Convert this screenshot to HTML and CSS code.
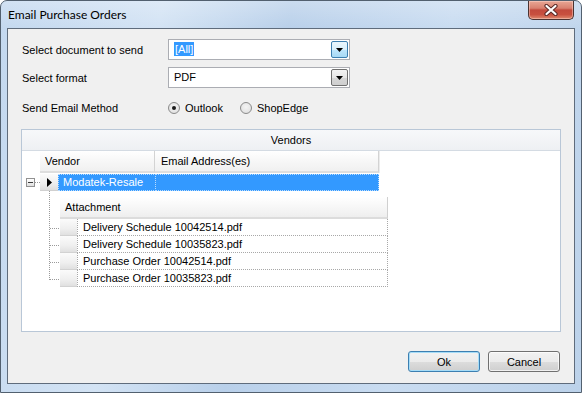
FILE: index.html
```html
<!DOCTYPE html>
<html>
<head>
<meta charset="utf-8">
<link rel="stylesheet" href="styles.css">
</head>
<body>
<div class="window">
  <div class="titlebar">
    <span class="title">Email Purchase Orders</span>
    <div class="close">
      <svg width="16" height="12" viewBox="0 0 16 12"><path d="M3.5 2 L12.5 10 M12.5 2 L3.5 10" stroke="#5a2a26" stroke-width="4.2" stroke-linecap="round"/><path d="M3.5 2 L12.5 10 M12.5 2 L3.5 10" stroke="#ffffff" stroke-width="2.2" stroke-linecap="round"/></svg>
    </div>
  </div>
  <div class="client">
    <div class="form">
      <div class="row">
        <span class="lbl">Select document to send</span>
        <div class="combo">
          <span class="val"><span class="hl">[All]</span></span>
          <span class="dd hot"><svg width="7" height="4" viewBox="0 0 7 4"><path d="M0 0 H7 L3.5 4 Z" fill="#000"/></svg></span>
        </div>
      </div>
      <div class="row r2">
        <span class="lbl">Select format</span>
        <div class="combo">
          <span class="val">PDF</span>
          <span class="dd"><svg width="7" height="4" viewBox="0 0 7 4"><path d="M0 0 H7 L3.5 4 Z" fill="#000"/></svg></span>
        </div>
      </div>
      <div class="row r3">
        <span class="lbl">Send Email Method</span>
        <span class="radio on"></span><span class="rtext">Outlook</span>
        <span class="radio second"></span><span class="rtext">ShopEdge</span>
      </div>
    </div>

    <div class="group">
      <div class="ghead">Vendors</div>
      <div class="grid">
        <div class="colhead">
          <div class="hc c1">Vendor</div>
          <div class="hc c2">Email Address(es)</div>
        </div>
        <div class="prow">
          <span class="exp"><i></i></span>
          <span class="plink"></span>
          <span class="ind"><svg width="5" height="9" viewBox="0 0 5 9"><path d="M0 0 L5 4.5 L0 9 Z" fill="#000"/></svg></span>
          <span class="sel s1">Modatek-Resale</span>
          <span class="sel s2"></span>
        </div>
        <div class="child">
          <svg class="spine" width="11" height="97" viewBox="0 0 11 97">
            <g stroke="#9a9a9a" stroke-width="1" stroke-dasharray="1 1" fill="none">
              <path d="M0.5 0 V89"/>
              <path d="M1 37.5 H11 M1 54.5 H11 M1 71.5 H11 M1 88.5 H11"/>
            </g>
          </svg>
          <div class="ctable">
            <div class="chead">Attachment</div>
            <div class="crow"><span class="cind"></span><span class="ccell">Delivery Schedule 10042514.pdf</span></div>
            <div class="crow"><span class="cind"></span><span class="ccell">Delivery Schedule 10035823.pdf</span></div>
            <div class="crow"><span class="cind"></span><span class="ccell">Purchase Order 10042514.pdf</span></div>
            <div class="crow"><span class="cind"></span><span class="ccell">Purchase Order 10035823.pdf</span></div>
          </div>
        </div>
      </div>
    </div>

    <div class="buttons">
      <button class="btn default">Ok</button>
      <button class="btn">Cancel</button>
    </div>
  </div>
</div>
</body>
</html>
```

FILE: styles.css
```css
* { box-sizing: border-box; margin: 0; padding: 0; }
html, body { width: 582px; height: 393px; overflow: hidden; background: #ffffff; }
body { font-family: "Liberation Sans", Arial, sans-serif; font-size: 11px; color: #000; }

.window {
  width: 582px; height: 393px;
  display: flex; flex-direction: column;
  border: 1px solid #52606f;
  border-radius: 7px 7px 0 0;
  background: linear-gradient(100deg, #c3d8ef 0%, #d3e3f4 25%, #b9d0ea 45%, #c9dcf1 70%, #bcd2ea 100%);
  overflow: hidden;
}

.titlebar {
  height: 27px; flex: none;
  display: flex; align-items: flex-start;
  background: linear-gradient(180deg, rgba(255,255,255,0.25), rgba(255,255,255,0) 100%);
}
.title {
  font-family: Lato, "Liberation Sans", sans-serif; font-size: 12px;
  color: #000; padding-left: 7px; line-height: 14px; margin-top: 7px;
}
.close {
  margin-left: auto; margin-right: 7px;
  width: 46px; height: 19px;
  border: 1px solid #4b3331; border-top: none;
  border-radius: 0 0 5px 5px;
  background: linear-gradient(180deg, #e8a795 0%, #d8806f 40%, #c24a3c 50%, #c8503f 75%, #df8a6e 100%);
  box-shadow: inset 0 0 0 1px rgba(255,220,210,0.45);
  display: flex; align-items: center; justify-content: center;
}

.client {
  height: 356px; flex: none;
  margin: 0 6px;
  border: 1px solid #5f6c7c;
  background: #f0f0f0;
  display: flex; flex-direction: column;
}

.form { padding: 10px 0 0 14px; }
.row { display: flex; align-items: center; height: 21px; }
.r2 { margin-top: 7px; }
.r3 { margin-top: 9px; }
.lbl { width: 146px; flex: none; }

.combo {
  width: 182px; height: 21px;
  border: 1px solid #abadb3;
  background: #fff;
  display: flex; align-items: center;
}
.val { flex: 1; padding-left: 5px; line-height: 13px; }
.hl { background: #3399ff; color: #fff; padding: 1px 1px; }
.dd {
  width: 17px; height: 17px; margin-right: 1px;
  border: 1px solid #707070;
  border-radius: 2px;
  background: linear-gradient(180deg, #f3f3f3 0%, #e6e6e6 50%, #d6d6d6 51%, #cfcfcf 100%);
  display: flex; align-items: center; justify-content: center;
}
.dd.hot {
  border-color: #3c7fb1;
  background: linear-gradient(180deg, #eaf6fd 0%, #d9f0fc 50%, #bee6fd 51%, #a7d9f5 100%);
}

.radio {
  width: 12px; height: 12px; border-radius: 50%;
  border: 1px solid #8a8a8a;
  background: radial-gradient(circle at 50% 40%, #f4f4f4 0%, #dcdcdc 100%);
  position: relative; flex: none; margin-top: 1px;
}
.radio.on::after {
  content: ""; position: absolute; left: 3px; top: 3px;
  width: 4px; height: 4px; border-radius: 50%; background: #1a1a1a;
}
.radio.second { margin-left: 17px; }
.rtext { margin-left: 5px; }

.group {
  margin: 11px 13px 0 13px;
  height: 203px; flex: none;
  border: 1px solid #b9c7d7;
  background: #fff;
}
.ghead {
  height: 21px;
  border-bottom: 1px solid #d4dbe3;
  background: linear-gradient(180deg, #f7f8fa 0%, #eef0f3 100%);
  text-align: center; line-height: 20px;
}

.colhead { display: flex; margin-left: 18px; height: 22px; }
.hc {
  height: 22px; line-height: 20px;
  background: linear-gradient(180deg, #ffffff 0%, #f7f7f7 50%, #f0f0f0 100%);
  border-right: 1px solid #d3d3d3;
  border-bottom: 2px solid #dedede;
  box-shadow: 1px 0 0 #ececec;
}
.c1 { width: 115px; padding-left: 5px; }
.c2 { width: 224px; padding-left: 6px; }

.prow { display: flex; align-items: center; height: 17px; margin-top: 1px; }
.exp {
  width: 9px; height: 9px; margin-left: 4px;
  border: 1px solid #919191;
  background: linear-gradient(180deg, #ffffff, #dfdfdf);
  display: flex; align-items: center; justify-content: center;
}
.exp i { display: block; width: 5px; height: 1px; background: #3a3a3a; }
.plink { width: 5px; height: 1px; border-top: 1px dotted #9a9a9a; }
.ind {
  width: 18px; height: 17px;
  background: linear-gradient(180deg, #fbfbfb 0%, #eeeeee 60%, #dedede 100%);
  border-bottom: 1px solid #d0d0d0;
  display: flex; align-items: center; justify-content: center;
}
.sel {
  height: 17px; background: #3399ff; color: #fff;
  border: 1px dotted #b8dcff;
  line-height: 15px;
}
.s1 { width: 98px; padding-left: 4px; }
.s2 { width: 223px; border-left: none; }

.child { display: flex; margin-left: 27px; }
.spine { flex: none; display: block; }
.ctable { width: 328px; margin-top: 6px; }
.chead {
  height: 22px; line-height: 20px; padding-left: 5px;
  background: linear-gradient(180deg, #ffffff 0%, #f7f7f7 50%, #eeeeee 100%);
  border-right: 1px solid #d0d0d0;
  border-bottom: 2px solid #dcdcdc;
}
.crow { display: flex; height: 17px; }
.cind {
  width: 17px; height: 17px; flex: none;
  background: linear-gradient(180deg, #fbfbfb 0%, #efefef 60%, #e0e0e0 100%);
  border-bottom: 1px solid #d2d2d2;
}
.ccell {
  flex: 1; height: 17px; line-height: 16px; padding-left: 5px;
  border-right: 1px dotted #a8a8a8;
  border-bottom: 1px dotted #a8a8a8;
  border-left: 1px dotted #a8a8a8;
}

.buttons {
  margin-top: auto;
  display: flex; justify-content: flex-end; gap: 8px;
  padding: 0 14px 11px 0;
}
.btn {
  width: 72px; height: 21px;
  font-family: "Liberation Sans", Arial, sans-serif; font-size: 11px; color: #000;
  border: 1px solid #707070; border-radius: 3px;
  background: linear-gradient(180deg, #f2f2f2 0%, #ebebeb 50%, #dddddd 51%, #cfcfcf 100%);
  box-shadow: inset 0 0 0 1px rgba(255,255,255,0.7);
}
.btn.default {
  border-color: #3c7fb1;
  box-shadow: inset 0 0 0 1px #a6dcf7;
}
```
